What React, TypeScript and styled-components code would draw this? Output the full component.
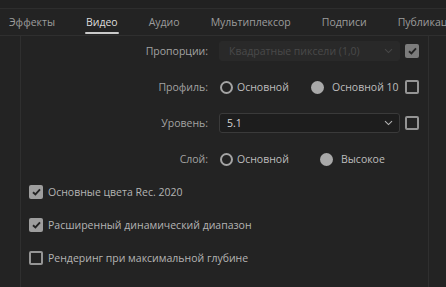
import styled, { createGlobalStyle } from "styled-components";

const GlobalStyle = createGlobalStyle`
  html, body {
    margin: 0;
    padding: 0;
    background: #232323;
  }
  body {
    font-family: "Open Sans", "Noto Sans", sans-serif;
    font-size: 10.5px;
    -webkit-font-smoothing: antialiased;
  }
`;

const TABS = ["Эффекты", "Видео", "Аудио", "Мультиплексор", "Подписи", "Публикация"];

const CheckMark = () => (
  <svg width="9" height="8" viewBox="0 0 9 8">
    <path d="M1 4.2 L3.4 6.4 L8 1.4" fill="none" stroke="#232323" strokeWidth="1.9" />
  </svg>
);

const Chevron = ({ color }: { color: string }) => (
  <svg width="9" height="6" viewBox="0 0 9 6">
    <path d="M1 1.2 L4.5 4.6 L8 1.2" fill="none" stroke={color} strokeWidth="1.1" />
  </svg>
);

const App = () => {
  return (
    <Page>
      <GlobalStyle />
      <TopStrip />
      <TabBar>
        {TABS.map((t) => (
          <Tab key={t} $active={t === "Видео"}>
            {t}
          </Tab>
        ))}
      </TabBar>
      <Body>
        <Gutter />
        <Content>
          <FormRow>
            <Label>Пропорции:</Label>
            <Select $disabled>
              <span>Квадратные пиксели (1,0)</span>
              <Chevron color="#474747" />
            </Select>
            <Box $checked $dim>
              <CheckMark />
            </Box>
          </FormRow>
          <FormRow>
            <Label>Профиль:</Label>
            <RadioGroup $first={91}>
              <RadioOption>
                <Radio />
                Основной
              </RadioOption>
              <RadioOption>
                <Radio $on />
                Основной 10
              </RadioOption>
            </RadioGroup>
            <Box />
          </FormRow>
          <FormRow>
            <Label>Уровень:</Label>
            <Select>
              <span>5.1</span>
              <Chevron color="#b4b4b4" />
            </Select>
            <Box />
          </FormRow>
          <FormRow>
            <Label>Слой:</Label>
            <RadioGroup $first={100}>
              <RadioOption>
                <Radio />
                Основной
              </RadioOption>
              <RadioOption>
                <Radio $on />
                Высокое
              </RadioOption>
            </RadioGroup>
          </FormRow>
          <Checks>
            <CheckRow>
              <Box $checked>
                <CheckMark />
              </Box>
              Основные цвета Rec. 2020
            </CheckRow>
            <CheckRow>
              <Box $checked>
                <CheckMark />
              </Box>
              Расширенный динамический диапазон
            </CheckRow>
            <CheckRow>
              <Box />
              Рендеринг при максимальной глубине
            </CheckRow>
          </Checks>
        </Content>
        <Rest />
      </Body>
    </Page>
  );
};

export default App;

const Page = styled.div`
  width: 446px;
  height: 287px;
  overflow: hidden;
  background: #232323;
  display: flex;
  flex-direction: column;
`;

const TopStrip = styled.div`
  height: 8px;
  background: #212121;
  border-bottom: 1px solid #2d2d2d;
`;

const TabBar = styled.div`
  height: 26px;
  display: flex;
  gap: 31px;
  padding-left: 9px;
  border-bottom: 1px solid #2f2f2f;
  white-space: nowrap;
  overflow: hidden;
`;

const Tab = styled.div<{ $active?: boolean }>`
  position: relative;
  line-height: 26px;
  color: ${(p) => (p.$active ? "#dcdcdc" : "#9c9c9c")};
  &::after {
    content: "";
    display: ${(p) => (p.$active ? "block" : "none")};
    position: absolute;
    left: -1px;
    right: -1px;
    bottom: 1px;
    height: 2px;
    border-radius: 1px;
    background: #c9c9c9;
  }
`;

const Body = styled.div`
  flex: 1;
  display: flex;
`;

const Gutter = styled.div`
  width: 20px;
  border-right: 1px solid #2f2f2f;
`;

const Content = styled.div`
  width: 407px;
  border-right: 1px solid #2f2f2f;
  padding-top: 5px;
  display: flex;
  flex-direction: column;
  gap: 16px;
`;

const Rest = styled.div`
  flex: 1;
`;

const FormRow = styled.div`
  display: grid;
  grid-template-columns: 187px 181px 14px;
  column-gap: 11px;
  align-items: center;
  height: 20px;
  & > :last-child:nth-child(3) {
    margin-left: -6px;
  }
`;

const Label = styled.div`
  text-align: right;
  color: #a2a2a2;
`;

const Select = styled.div<{ $disabled?: boolean }>`
  box-sizing: border-box;
  height: 20px;
  display: flex;
  align-items: center;
  justify-content: space-between;
  padding: 0 6px 0 ${(p) => (p.$disabled ? 9 : 7)}px;
  border-radius: 3px;
  background: ${(p) => (p.$disabled ? "#292929" : "#1d1d1d")};
  border: 1px solid ${(p) => (p.$disabled ? "#292929" : "#3a3a3a")};
  color: ${(p) => (p.$disabled ? "#4a4a4a" : "#d6d6d6")};
`;

const Box = styled.div<{ $checked?: boolean; $dim?: boolean }>`
  box-sizing: border-box;
  width: 14px;
  height: 14px;
  border-radius: 2px;
  display: flex;
  align-items: center;
  justify-content: center;
  flex-shrink: 0;
  background: ${(p) => (p.$checked ? (p.$dim ? "#7c7c7c" : "#9e9e9e") : "transparent")};
  border: ${(p) => (p.$checked ? "none" : "2px solid #959595")};
`;

const RadioGroup = styled.div<{ $first: number }>`
  display: grid;
  grid-template-columns: ${(p) => p.$first}px auto;
  align-items: center;
  padding-left: 1px;
`;

const RadioOption = styled.div`
  display: flex;
  align-items: center;
  gap: 4px;
  color: #bdbdbd;
  white-space: nowrap;
`;

const Radio = styled.span<{ $on?: boolean }>`
  box-sizing: border-box;
  width: 13px;
  height: 13px;
  border-radius: 50%;
  border: ${(p) => (p.$on ? "none" : "2px solid #a4a4a4")};
  background: ${(p) => (p.$on ? "#a9a9a9" : "transparent")};
  margin-right: ${(p) => (p.$on ? 4 : 0)}px;
`;

const Checks = styled.div`
  display: flex;
  flex-direction: column;
  gap: 19px;
  padding: 0 0 0 8px;
`;

const CheckRow = styled.div`
  display: flex;
  align-items: center;
  gap: 5px;
  height: 14px;
  color: #b4b4b4;
`;
